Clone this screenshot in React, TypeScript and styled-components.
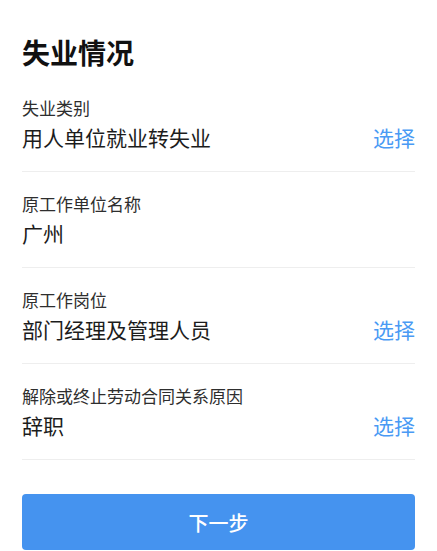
import React from 'react';
import styled, { createGlobalStyle } from 'styled-components';

const GlobalStyle = createGlobalStyle`
  html, body {
    margin: 0;
    padding: 0;
    background: #fff;
  }
  body {
    font-family: "Noto Sans CJK SC", "Noto Sans", sans-serif;
  }
`;

const Page = styled.div`
  display: flex;
  flex-direction: column;
  padding: 32px 22px 0 22px;
  height: 551px;
  box-sizing: border-box;
  overflow: hidden;
`;

const Title = styled.h1`
  margin: 0 0 4px 0;
  font-size: 28px;
  line-height: 40px;
  font-weight: bold;
  color: #111;
`;

const Field = styled.div`
  display: flex;
  flex-direction: column;
  gap: 4px;
  padding: 21px 0 20px 0;
  border-bottom: 1px solid #eeeeee;
`;

const Label = styled.div`
  font-size: 17px;
  line-height: 22px;
  color: #2e2e2e;
`;

const ValueRow = styled.div`
  display: flex;
  justify-content: space-between;
  align-items: center;
`;

const Value = styled.div`
  font-size: 21px;
  line-height: 28px;
  color: #1c1c1c;
`;

const Pick = styled.span`
  font-size: 21px;
  line-height: 28px;
  color: #4a9af4;
`;

const NextButton = styled.button`
  margin-top: 34px;
  height: 56px;
  width: 100%;
  border: none;
  border-radius: 4px;
  background-color: #4593ef;
  color: #fff;
  font-family: inherit;
  font-size: 20px;
  font-weight: 500;
  cursor: pointer;
`;

interface FieldItem {
  label: string;
  value: string;
  selectable: boolean;
}

const fields: FieldItem[] = [
  { label: '失业类别', value: '用人单位就业转失业', selectable: true },
  { label: '原工作单位名称', value: '广州', selectable: false },
  { label: '原工作岗位', value: '部门经理及管理人员', selectable: true },
  { label: '解除或终止劳动合同关系原因', value: '辞职', selectable: true },
];

const App: React.FC = () => {
  return (
    <>
      <GlobalStyle />
      <Page>
        <Title>失业情况</Title>
        {fields.map((f) => (
          <Field key={f.label}>
            <Label>{f.label}</Label>
            <ValueRow>
              <Value>{f.value}</Value>
              {f.selectable && <Pick>选择</Pick>}
            </ValueRow>
          </Field>
        ))}
        <NextButton>下一步</NextButton>
      </Page>
    </>
  );
};

export default App;
